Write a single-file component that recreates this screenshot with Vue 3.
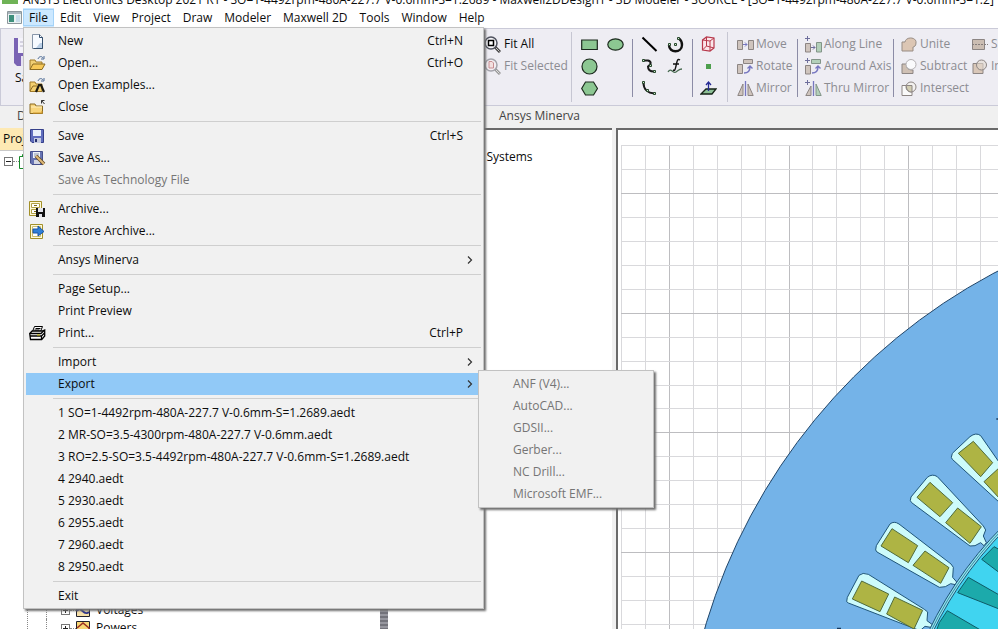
<script setup>
const icons = {
  new: '<path d="M3.500 1.500h7l3 3v11h-10z" fill="#f6faff" stroke="#8795a8"/><path d="M10.500 1.500v3h3v11h-9" fill="none" stroke="#34506e"/><path d="M11 10h2v5H7z" fill="#bcd0e6"/>',
  open: '<path d="M1 14.500V5h5l1 2h6v3" fill="#f0cf74" stroke="#a07a28"/><path d="M1 14.500L4 9h12l-3 5.500z" fill="#f7c958" stroke="#8a6a22"/><path d="M9 4c1-3 4-3 5-1m1-2v3h-3" fill="none" stroke="#4c6a95"/>',
  examples: '<path d="M1 14.500V5h5l1 2h6v7.500z" fill="#f3cf6e" stroke="#a07a28"/><path d="M1 14l3-5h4" fill="none" stroke="#8a6a22"/><path d="M7 15l3-7h2l3 7" fill="none" stroke="#1c1a12" stroke-width="2.200"/><path d="M9 4c1-3 4-3 5-1m1-2v3h-3" fill="none" stroke="#4c6a95"/>',
  close: '<path d="M1 14.500V5h5l1 2h6.500v7.500z" fill="#f8d57c" stroke="#8a6a22"/><path d="M2 8h11" stroke="#fff0bd"/><path d="M13 12v2H4" fill="none" stroke="#d39a2c"/><path d="M15.500 5L12.500 1.500m0 3v-3h3" fill="none" stroke="#333"/>',
  save: '<path d="M1.500 1.500h13v13H3l-1.500-1.500z" fill="#5f6dbd" stroke="#36408a"/><path d="M4 2h8v6H4z" fill="#e8effa"/><path d="M5 10h7v5H5z" fill="#c5cbe0"/><path d="M6 11h2v3H6z" fill="#26306e"/>',
  saveas: '<path d="M1.500 1.500h12v13H3l-1.500-1.500z" fill="#6673b2" stroke="#454f8c"/><path d="M4 2h7v6H4z" fill="#edf2fa"/><path d="M5 4h5M5 6h5" stroke="#8d96ad"/><path d="M5 10h6v4H5z" fill="#d4d7e2"/><path d="M7 6l8 8" stroke="#5f4a27" stroke-width="3.500"/><path d="M7 6l8 8" stroke="#dfb977" stroke-width="2"/>',
  archive: '<path d="M.500.500h12v14H.500z" fill="#fff9d8" stroke="#a39028"/><path d="M2.500 2.500h8v4h-8zM2.500 8.500h8v4h-8z" fill="#fff" stroke="#b1a044"/><path d="M5 4.500h3M5 10.500h2" stroke="#806b10"/><path d="M7 7h9v9H7z" fill="#111"/><path d="M9 7h5v4H9zM10 13h3v3h-3z" fill="#e4e4ec"/>',
  restore: '<path d="M1.500 1.500h12v14h-12z" fill="#fff9d8" stroke="#a39028"/><path d="M3.500 3.500h8v10h-8z" fill="#fff" stroke="#c8bb6e"/><path d="M4 6h5V3l6 5.500L9 13v-3H4z" fill="#2f7fd8" stroke="#1b55a2"/>',
  print: '<path d="M5.500 1.500h8l-2 5h-8z" fill="#fff" stroke="#000"/><path d="M6.500 3.500h5M5.500 5h5" stroke="#000"/><path d="M.700 8.500l2.500-2.500h10l2.500-1v6l-3 3.500H1.500z" fill="#fff" stroke="#000" stroke-width="1.300"/><path d="M1 8.500h11l3-3M1 11h11.500v3M12.500 11l3-3" fill="none" stroke="#000" stroke-width="1.300"/><path d="M8 10h3" stroke="#c9b800"/>',
  fit: '<path d="M11 11l5 5" stroke="#444" stroke-width="3"/><path d="M12 12l3.500 3.500" stroke="#c8c8c8" stroke-width="1"/><circle cx="7" cy="7" r="6" fill="#f7f7fb" stroke="#50535f" stroke-width="1.500"/><path d="M4.500 4.500h5v5h-5z" fill="#fff" stroke="#000" stroke-width="1.500"/>',
  fitsel: '<path d="M11 11l5 5" stroke="#999" stroke-width="3"/><path d="M12 12l3.500 3.500" stroke="#ddd" stroke-width="1"/><circle cx="7" cy="7" r="6" fill="#f3eef2" stroke="#a3a3aa" stroke-width="1.500"/><path d="M5 3.500h3l1.500 1.500v5H5z" fill="#f3e0e0" stroke="#c78f92"/>',
  rect: '<path d="M.700 4h15.600v9.500H.700z" fill="#8cc792" stroke="#1c2a1e" stroke-width="1.200"/>',
  ellipse: '<ellipse cx="8.500" cy="8.500" rx="7.700" ry="5.700" fill="#8cc792" stroke="#1c2a1e" stroke-width="1.200"/>',
  circle: '<circle cx="8.500" cy="8.500" r="7.500" fill="#8cc792" stroke="#1c2a1e" stroke-width="1.200"/>',
  hex: '<path d="M4.500 2h8l4 6.500-4 6.500h-8L.700 8.500z" fill="#8cc792" stroke="#1c2a1e" stroke-width="1.200"/>',
  line: '<path d="M1.500 1.500l14 13.500" stroke="#000" stroke-width="2"/>',
  spline: '<path d="M3 2.500h4c4 1 3 4 0 6 0 4 2 5 6 5" fill="none" stroke="#1a1a1a" stroke-width="2"/><path d="M1.500 1.500h2v2h-2zM8.500 6.500h2v2h-2zM12.500 12.500h2v2h-2z" fill="#cfe8d0" stroke="#28482c"/>',
  arc3: '<path d="M2.500 3c0 6 4 10 11 10.500" fill="none" stroke="#1a1a1a" stroke-width="2"/><path d="M1.500 1.500h2v2h-2zM5.500 9.500h2v2h-2zM12.500 12.500h2v2h-2z" fill="#cfe8d0" stroke="#28482c"/>',
  arcc: '<path d="M2 9c0 8.500 13 8 13 0 0-3-1-5-3-6.500" fill="none" stroke="#111" stroke-width="2.400"/><path d="M1.500 7.500h2v2h-2zM7.500 7.500h2v2h-2zM10.500 1.500h2v2h-2z" fill="#cfe8d0" stroke="#28482c"/>',
  func: '<path d="M13 2c-3-2-3 2-4 6s-1 5-3 4M6 6h6" fill="none" stroke="#111" stroke-width="1.400"/><path d="M1 14c3-5 5 2 8 0s3-3 6-3" fill="none" stroke="#486a50" stroke-width="1.300"/>',
  box: '<path d="M2.500 4l4-3 7.500 1v10l-4 3-7.500-1z" fill="#fbe6ea" stroke="#b7384b" stroke-width="1.200"/><path d="M2.500 4l7.500 1 4-3M10 5v10M6.500 1v9L2.500 14M6.500 10l7.500 2" fill="none" stroke="#b7384b"/>',
  point: '<path d="M6 6h5v5H6z" fill="#4d9f4d"/>',
  plane: '<path d="M1 14l5-5h10l-4 5z" fill="#8cbf95" stroke="#152317" stroke-width="1.300"/><path d="M8.500 11V3M6 5l2.500-3L11 5" fill="none" stroke="#252a94" stroke-width="1.300"/>',
  move: '<path d="M.500 4.500h5v9h-5zM11.500 4.500h5v9h-5z" fill="#cfc4bd" stroke="#8c8583"/><path d="M6 8.500h4M8 6.500l2 2-2 2" fill="none" stroke="#7676c0"/>',
  rotate: '<path d="M.500 6.500h5v9h-5zM6.500 1.500h9v4h-9z" fill="#cfc4bd" stroke="#8c8583"/><path d="M7 15c5 0 6-3 6-6M10.500 10.500L13 8l2.500 2.500" fill="none" stroke="#7676c0" stroke-width="1.400"/>',
  mirror: '<path d="M6 4v11.500H.800zM11 4v11.500h5.200z" fill="#cfc4bd" stroke="#8c8583"/><path d="M8.500 1v15" stroke="#7676c0" stroke-width="1.300"/>',
  along: '<path d="M.500 7.500h5v8.500h-5z" fill="#cfc4bd" stroke="#8c8583"/><path d="M11.500 6.500h5v9.500h-5z" fill="#b3d0ba" stroke="#829488"/><path d="M6 11.500h4M8 9.500l2 2-2 2M2.500 0v5M0 2.500h5" fill="none" stroke="#6e6e9c"/>',
  around: '<path d="M.500 7.500h5v8.500h-5z" fill="#cfc4bd" stroke="#8c8583"/><path d="M6.500 1.500h9v4h-9z" fill="#b3d0ba" stroke="#829488"/><path d="M7 15c5 0 6-3 6-6M10.500 10.500L13 8l2.500 2.500" fill="none" stroke="#7676c0" stroke-width="1.400"/><path d="M2.500 0v5M0 2.500h5" stroke="#6e6e9c"/>',
  thru: '<path d="M6 6v9.500H.800z" fill="#cfc4bd" stroke="#8c8583"/><path d="M11 4v11.500h5.200z" fill="#b3d0ba" stroke="#829488"/><path d="M8.500 1v15" stroke="#7676c0" stroke-width="1.300"/><path d="M2.500 0v5M0 2.500h5" stroke="#6e6e9c"/>',
  unite: '<path d="M1 6h3c1-6 12-5 11 1 0 3-2 4-3 4v4H1z" fill="#dcc6b4" stroke="#978c84"/>',
  subtract: '<path d="M1 6h5c-1 4 1 6 6 6v3.500H1z" fill="#cfc0b4" stroke="#8c8583"/><circle cx="10" cy="6.500" r="5" fill="#fafafc" stroke="#b3b0b2"/>',
  intersect: '<path d="M1 5.500h10v10H1z" fill="#fafafa" stroke="#8c8583"/><circle cx="10" cy="7" r="5" fill="#f3f1ef" stroke="#8c8583"/><path d="M5.500 5.500H11V12c-4 0-6-3-5.500-6.500z" fill="#d2cdb2" stroke="#8c8583"/>',
  split: '<path d="M.500 3.500h12v10H.500z" fill="#cbbdb2" stroke="#8c8583"/><path d="M0 8.500h16" stroke="#857d7b" stroke-dasharray="2 1"/>',
  imprint: '<path d="M1 5.500h10v10H1z" fill="#d9c7b8" stroke="#8c8583"/><circle cx="9.500" cy="7" r="5" fill="#e3d8ce" fill-opacity=".6" stroke="#8c8583"/>',
}

const menus = ['File', 'Edit', 'View', 'Project', 'Draw', 'Modeler', 'Maxwell 2D', 'Tools', 'Window', 'Help']

const fileMenu = [
  [
    { label: 'New', icon: 'new', key: 'Ctrl+N' },
    { label: 'Open...', icon: 'open', key: 'Ctrl+O' },
    { label: 'Open Examples...', icon: 'examples' },
    { label: 'Close', icon: 'close' },
  ],
  [
    { label: 'Save', icon: 'save', key: 'Ctrl+S' },
    { label: 'Save As...', icon: 'saveas' },
    { label: 'Save As Technology File', disabled: true },
  ],
  [
    { label: 'Archive...', icon: 'archive' },
    { label: 'Restore Archive...', icon: 'restore' },
  ],
  [{ label: 'Ansys Minerva', arrow: true }],
  [
    { label: 'Page Setup...' },
    { label: 'Print Preview' },
    { label: 'Print...', icon: 'print', key: 'Ctrl+P' },
  ],
  [
    { label: 'Import', arrow: true },
    {
      label: 'Export',
      arrow: true,
      sub: ['ANF (V4)...', 'AutoCAD...', 'GDSII...', 'Gerber...', 'NC Drill...', 'Microsoft EMF...'],
    },
  ],
  [
    { label: '1 SO=1-4492rpm-480A-227.7 V-0.6mm-S=1.2689.aedt' },
    { label: '2 MR-SO=3.5-4300rpm-480A-227.7 V-0.6mm.aedt' },
    { label: '3 RO=2.5-SO=3.5-4492rpm-480A-227.7 V-0.6mm-S=1.2689.aedt' },
    { label: '4 2940.aedt' },
    { label: '5 2930.aedt' },
    { label: '6 2955.aedt' },
    { label: '7 2960.aedt' },
    { label: '8 2950.aedt' },
  ],
  [{ label: 'Exit' }],
]

const shapeTools = [
  ['rect', 'Rectangle'], ['ellipse', 'Ellipse'], ['circle', 'Circle'], null, ['hex', 'Polygon'],
]
const lineTools = [
  ['line', 'Line'], ['arcc', 'Center arc'], ['spline', 'Spline'], ['func', 'Equation curve'], ['arc3', 'Three point arc'],
]
const solidTools = [['box', 'Box'], ['point', 'Point'], ['plane', 'Plane']]
const editColumns = [
  { name: 'transform', tools: [['move', 'Move'], ['rotate', 'Rotate'], ['mirror', 'Mirror']] },
  { name: 'duplicate', tools: [['along', 'Along Line'], ['around', 'Around Axis'], ['thru', 'Thru Mirror']] },
  { name: 'boolean', tools: [['unite', 'Unite'], ['subtract', 'Subtract'], ['intersect', 'Intersect']] },
  { name: 'cut', tools: [['split', 'Split'], ['imprint', 'Imprint']] },
]

const gridX = Array.from({ length: 16 }, (_, i) => ({ at: Math.round(621 + i * 23.93) + 0.5, major: i % 5 === 2 }))
const gridY = Array.from({ length: 21 }, (_, i) => ({ at: Math.round(145 + i * 23.95) + 0.5, major: i % 5 === 2 }))

const slots = [
  'M784 172L787 160L840 110Q858 96 872 107L940 205V318L787 178Z',
  'M661 302L663 291L712 232Q727 220 742 230L880 378L887 390L880 408L889 428L882 437L872 428L855 437L840 438L665 308Z',
  'M557 450L559 437L600 372Q612 362 627 372L783 492L790 502L788 532L800 546L796 554L782 551L766 560L748 562L561 456Z',
  'M470 605L472 592L507 526Q518 516 535 523L703 628L713 636L711 662L727 674L722 682L705 679L690 692L475 609Z',
]
const coils = [
  '850,124 908,188 872,230 805,160', '940,192 882,245 940,308',
  '720,247 788,308 750,350 681,292', '803,324 874,380 840,430 767,368',
  '606,386 683,437 655,488 573,438', '705,453 777,503 752,550 669,496',
  '515,543 596,582 570,635 487,597', '614,591 698,631 672,687 590,642',
]
const magnets = ['912,440 940,455 940,527 875,478', '835,532 940,592 940,632 803,578', '772,632 880,695 738,695 748,668']
</script>

<template>
  <div class="app">
    <header class="title-bar">
      <span class="app-logo"></span>
      <span class="title">ANSYS Electronics Desktop 2021 R1 - SO=1-4492rpm-480A-227.7 V-0.6mm-S=1.2689 - Maxwell2DDesign1 - 3D Modeler - SOURCE - [SO=1-4492rpm-480A-227.7 V-0.6mm-S=1.2]</span>
    </header>

    <nav class="menu-bar">
      <svg class="doc-icon" viewBox="0 0 15 13">
        <path d="M.500.500h14v12H.500z" fill="#e9f0f2" stroke="#8d979c" />
        <path d="M1 1h13v2H1z" fill="#a9b6bd" />
        <path d="M2 4h5v7H2z" fill="#3e8f7c" />
        <path d="M9 4h4v7H9z" fill="#c8dcea" />
      </svg>
      <div v-for="m in menus" :key="m" class="menu-root">
        <button class="menu-title" :class="{ open: m === 'File' }">{{ m }}</button>
        <div v-if="m === 'File'" class="popup file-menu">
          <div v-for="(group, g) in fileMenu" :key="g" class="menu-group">
            <div v-for="item in group" :key="item.label" class="menu-row">
              <button class="menu-item" :class="{ active: item.sub }" :disabled="item.disabled">
                <span class="item-icon">
                  <svg v-if="item.icon" viewBox="0 0 17 17" v-html="icons[item.icon]"></svg>
                </span>
                <span class="item-label">{{ item.label }}</span>
                <span v-if="item.key" class="item-key">{{ item.key }}</span>
                <svg v-if="item.arrow" class="item-arrow" viewBox="0 0 6 8"><path d="M1 .500L4.500 4 1 7.500" /></svg>
              </button>
              <div v-if="item.sub" class="popup sub-menu">
                <button v-for="s in item.sub" :key="s" class="menu-item" disabled>
                  <span class="item-icon"></span>
                  <span class="item-label">{{ s }}</span>
                </button>
              </div>
            </div>
          </div>
        </div>
      </div>
    </nav>

    <div class="ribbon">
      <div class="save-group">
        <button class="save-tool">
          <svg viewBox="0 0 28 28">
            <path d="M0 0h28v28H3l-3-3z" fill="#7a63b4" />
            <path d="M4 0h20v15H4z" fill="#f4f3fa" />
            <path d="M6 4h16M6 8h16" stroke="#b6b2c8" />
            <path d="M7 18h14v10H7z" fill="#e7e3f3" />
          </svg>
          <span>Save</span>
        </button>
      </div>
      <div class="ribbon-group view-group">
        <button class="tool"><svg viewBox="0 0 17 17" v-html="icons.fit"></svg>Fit All</button>
        <button class="tool" disabled><svg viewBox="0 0 17 17" v-html="icons.fitsel"></svg>Fit Selected</button>
      </div>
      <div class="ribbon-group draw-group">
        <div class="icon-grid">
          <template v-for="(t, i) in shapeTools" :key="i">
            <button v-if="t" class="icon-tool" :aria-label="t[1]"><svg viewBox="0 0 17 17" v-html="icons[t[0]]"></svg></button>
            <span v-else></span>
          </template>
        </div>
        <div class="icon-grid ruled">
          <button v-for="t in lineTools" :key="t[0]" class="icon-tool" :aria-label="t[1]"><svg viewBox="0 0 17 17" v-html="icons[t[0]]"></svg></button>
        </div>
        <div class="icon-column ruled">
          <button v-for="t in solidTools" :key="t[0]" class="icon-tool" :aria-label="t[1]"><svg viewBox="0 0 17 17" v-html="icons[t[0]]"></svg></button>
        </div>
      </div>
      <div class="ribbon-group edit-group">
        <div v-for="c in editColumns" :key="c.name" class="tool-column" :class="c.name">
          <button v-for="t in c.tools" :key="t[0]" class="tool" disabled><svg viewBox="0 0 17 17" v-html="icons[t[0]]"></svg>{{ t[1] }}</button>
        </div>
      </div>
    </div>

    <div class="tab-strip">
      <a href="#" class="tab first">Desktop</a>
      <a href="#" class="tab">Ansys Minerva</a>
    </div>

    <main class="workspace">
      <section class="project-panel">
        <h2 class="panel-title">Project Manager</h2>
        <div class="tree">
          <div class="tree-root">
            <span class="twisty minus"></span>
            <span class="dots"></span>
            <svg class="project-icon" viewBox="0 0 14 15"><path d="M3.500 3V.500h10v12H11M.500 2.500h8v12h-8z" /></svg>
          </div>
          <div class="branch">
            <div class="tree-row">
              <span class="twisty plus"></span><span class="dots"></span>
              <svg class="node-icon" viewBox="0 0 14 14"><path d="M.500.500h13v13H.500z" fill="#f6dfa8" stroke="#20202c" /><path d="M1 8c4-7 6 6 12 1" fill="none" stroke="#2b328c" stroke-width="2" /></svg>
              <span>Voltages</span>
            </div>
            <div class="tree-row">
              <span class="twisty plus"></span><span class="dots"></span>
              <svg class="node-icon" viewBox="0 0 14 14"><path d="M.500.500h13v13H.500z" fill="#f9d774" stroke="#20202c" /><path d="M1 7l6-5 6 5v5" fill="none" stroke="#9c3020" stroke-width="1.600" /></svg>
              <span>Powers</span>
            </div>
          </div>
        </div>
      </section>
      <div class="splitter"></div>
      <section class="systems-panel"><span>Coordinate Systems</span></section>
      <section class="canvas">
        <svg class="drawing">
          <g transform="translate(-618 -130)">
            <path v-for="l in gridX" :key="'x' + l.at" :d="`M${l.at} 145V640`" :stroke="l.major ? '#bdbdc0' : '#d9d9dc'" />
            <path v-for="l in gridY" :key="'y' + l.at" :d="`M621 ${l.at}H2000`" :stroke="l.major ? '#bdbdc0' : '#d9d9dc'" />
            <circle cx="1271" cy="794" r="590" fill="#74b3e8" stroke="#1f4468" />
            <g transform="translate(690 400) scale(.33333)">
              <path v-for="s in slots" :key="s" :d="s" fill="#ccfbfb" stroke="#1f5478" stroke-width="3" stroke-linejoin="round" />
              <polygon v-for="c in coils" :key="c" :points="c" fill="#aeb444" stroke="#4f6a3c" stroke-width="3" />
              <path d="M919 57h5M441 685h12" stroke="#173a60" stroke-width="4" />
            </g>
            <circle cx="1271" cy="794" r="379" fill="#8ee4ee" stroke="#1f5478" />
            <circle cx="1271" cy="794" r="377" fill="none" stroke="#3d87a0" />
            <circle cx="1271" cy="794" r="375" fill="#40d4f0" stroke="#1f5478" />
            <g transform="translate(690 400) scale(.33333)">
              <polygon v-for="m in magnets" :key="m" :points="m" fill="#1caaab" stroke="#0e5a66" stroke-width="3" />
            </g>
          </g>
        </svg>
      </section>
    </main>
  </div>
</template>

<style>
body {
  margin: 0;
  overflow: hidden;
}
</style>

<style scoped>
.app {
  display: flex;
  flex-direction: column;
  height: 100vh;
  overflow: hidden;
  background: #f0f0f0;
  color: #0c0c0c;
  font: 12px/16px "Open Sans", "Noto Sans", sans-serif;
  white-space: nowrap;
}
button {
  margin: 0;
  padding: 0;
  border: 0;
  background: none;
  color: inherit;
  font: inherit;
  text-align: left;
}
svg {
  display: block;
  flex: none;
}
.title-bar {
  display: flex;
  align-items: flex-end;
  gap: 5px;
  height: 8px;
  flex: none;
  padding-left: 2px;
  background: #fff;
  overflow: hidden;
}
.app-logo {
  width: 16px;
  height: 16px;
  flex: none;
  margin-bottom: 4px;
  background: #6fb356;
}
.menu-bar {
  display: flex;
  height: 20px;
  flex: none;
  background: #fff;
}
.doc-icon {
  width: 15px;
  height: 13px;
  margin: 3px 1px 0 7px;
}
.menu-root {
  position: relative;
}
.menu-title {
  display: block;
  box-sizing: border-box;
  height: 19px;
  padding: 0 6px;
  border: 1px solid transparent;
  border-width: 1px 0;
}
.menu-title.open {
  background: #cce8ff;
  box-shadow: inset 0 0 0 1px #a5d3f8;
}
.popup {
  position: absolute;
  box-sizing: border-box;
  padding: 2px;
  border: 1px solid #c2c2c2;
  background: #f1f1f1;
  box-shadow: 2px 2px 2px #707070;
}
.file-menu {
  z-index: 2;
  top: 19px;
  left: 0;
  width: 461px;
  padding-bottom: 1px;
}
.menu-group + .menu-group::before {
  content: "";
  display: block;
  height: 1px;
  margin: 3px 0 3px 27px;
  background: #cfcfcf;
}
.menu-row {
  position: relative;
}
.menu-item {
  display: flex;
  align-items: center;
  width: 100%;
  height: 22px;
}
.menu-item:disabled {
  color: #757575;
}
.menu-item.active {
  background: #91c9f7;
}
.item-icon {
  width: 32px;
  flex: none;
}
.item-icon svg {
  width: 17px;
  height: 17px;
  margin-left: 3px;
}
.item-label {
  flex: 1;
}
.item-key {
  margin-right: 18px;
}
.item-arrow {
  width: 6px;
  height: 8px;
  margin-right: 8px;
  fill: none;
  stroke: #333;
  stroke-width: 1.2;
}
.sub-menu {
  z-index: 3;
  top: -3px;
  left: 452px;
  width: 176px;
}
.ribbon {
  display: flex;
  box-sizing: border-box;
  height: 78px;
  flex: none;
  border: 1px solid #cacad8;
  border-right: 0;
  background: #eeedf3;
  overflow: hidden;
}
.save-group {
  width: 470px;
  flex: none;
  padding: 9px 0 0 13px;
}
.save-tool {
  display: flex;
  flex-direction: column;
  align-items: center;
  gap: 4px;
}
.save-tool svg {
  width: 28px;
  height: 28px;
}
.ribbon-group {
  display: flex;
  flex: none;
  margin: 3px 0;
  padding: 1px 0;
  border-right: 1px solid #c6c6d2;
}
.view-group {
  flex-direction: column;
  width: 87px;
}
.tool {
  display: flex;
  align-items: center;
  gap: 3px;
  height: 22px;
}
.tool:disabled {
  color: #8c8c92;
}
.tool svg,
.icon-tool svg {
  width: 17px;
  height: 17px;
}
.icon-grid,
.icon-column {
  display: grid;
  grid-template-rows: repeat(3, 22px);
}
.icon-grid {
  grid-template-columns: 17px 17px;
  column-gap: 9px;
  padding: 0 8px 0 9px;
}
.icon-column {
  padding: 0 10px 0 8px;
}
.icon-tool {
  display: flex;
  align-items: center;
}
.ruled {
  position: relative;
}
.ruled::before,
.tool-column.duplicate::before,
.tool-column.boolean::before {
  content: "";
  position: absolute;
  top: 6px;
  left: 0;
  width: 1px;
  height: 58px;
  background: #8c8ca6;
}
.edit-group {
  flex: 1;
  padding-left: 9px;
  border-right: 0;
}
.tool-column {
  position: relative;
  box-sizing: border-box;
  flex: none;
}
.tool-column .tool {
  gap: 2px;
}
.transform {
  width: 60px;
}
.duplicate {
  width: 96px;
  padding-left: 8px;
}
.boolean {
  width: 79px;
  padding-left: 8px;
}
.tab-strip {
  display: flex;
  box-sizing: border-box;
  height: 22px;
  flex: none;
  align-items: center;
  padding-bottom: 2px;
}
.tab {
  color: #444;
  text-decoration: none;
}
.tab.first {
  width: 482px;
  padding-left: 17px;
}
.workspace {
  display: flex;
  flex: 1;
  min-height: 0;
}
.project-panel {
  display: flex;
  flex-direction: column;
  width: 380px;
  flex: none;
  background: #fff;
}
.panel-title {
  margin: 0;
  padding: 3px;
  border-bottom: 1px solid #c9c9c9;
  background: #fde9b3;
  font: inherit;
}
.tree {
  display: flex;
  flex: 1;
  flex-direction: column;
  justify-content: space-between;
  min-height: 0;
}
.tree-root {
  display: flex;
  align-items: center;
  height: 20px;
  padding-left: 4px;
}
.twisty {
  width: 7px;
  height: 7px;
  flex: none;
  border: 1px solid #777;
  background: linear-gradient(#222, #222) center / 5px 1px no-repeat, #fff;
}
.twisty.plus {
  background: linear-gradient(#222, #222) center / 5px 1px no-repeat, linear-gradient(#222, #222) center / 1px 5px no-repeat, #fff;
}
.dots {
  width: 6px;
  border-top: 1px dotted #888;
}
.project-icon {
  width: 14px;
  height: 15px;
  fill: none;
  stroke: #168a28;
}
.branch {
  display: flex;
  flex-direction: column;
  margin: 0 0 -8px 27px;
  padding-left: 18px;
  border-left: 1px dotted #888;
}
.branch .tree-row {
  padding-left: 14px;
}
.tree-row {
  display: flex;
  align-items: center;
  height: 18px;
  border-left: 1px dotted #888;
}
.node-icon {
  width: 14px;
  height: 14px;
  margin-right: 6px;
}
.splitter {
  width: 8px;
  flex: none;
  background: repeating-linear-gradient(#74747c 0 2px, #97979f 2px 4px);
}
.systems-panel {
  box-sizing: border-box;
  width: 224px;
  flex: none;
  padding: 19px 0 0 33px;
  border-top: 2px solid #6a6a6a;
  background: #fff;
}
.canvas {
  display: flex;
  flex: 1;
  min-width: 0;
  margin-left: 4px;
  border-top: 2px solid #6a6a6a;
  border-left: 2px solid #6a6a6a;
  background: #fff;
  overflow: hidden;
}
.drawing {
  flex: 1;
  min-width: 0;
  height: 100%;
}
</style>
